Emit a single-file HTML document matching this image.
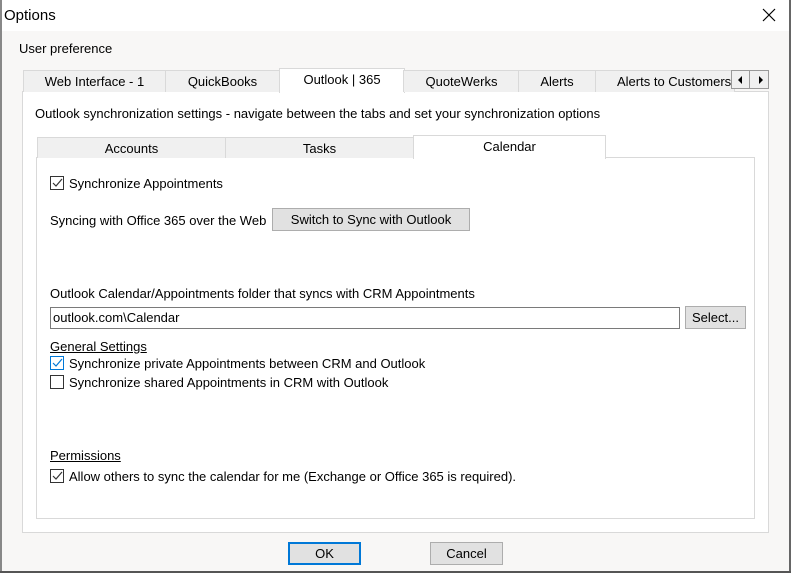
<!DOCTYPE html>
<html><head><style>
*{box-sizing:border-box;margin:0;padding:0}
body{width:794px;height:573px;position:relative;background:#fff;font-family:"Liberation Sans",sans-serif;font-size:13px;color:#000;overflow:hidden}
.a{position:absolute;white-space:nowrap}
.tab{position:absolute;background:#f0f0f0;border:1px solid #d9d9d9;border-bottom:none;text-align:center;line-height:21px}
.cb{position:absolute;width:14px;height:14px;border:1px solid #333;background:#fff}
.btn{position:absolute;background:#e1e1e1;border:1px solid #adadad;text-align:center}
</style></head><body>
<div class="a" style="left:4px;top:7px;font-size:15px">Options</div>
<svg class="a" style="left:762px;top:8px" width="14" height="14"><path d="M1 1L13 13M13 1L1 13" stroke="#000" stroke-width="1.2"/></svg>
<div class="a" style="left:0;top:31px;width:790px;height:542px;background:#f8f7f6"></div>
<div class="a" style="left:0;top:0;width:2px;height:573px;background:#888"></div>
<div class="a" style="left:789px;top:0;width:2px;height:573px;background:#666"></div>
<div class="a" style="left:0;top:571px;width:791px;height:2px;background:#555"></div>
<div class="a" style="left:19px;top:41px">User preference</div>
<div class="a" style="left:22px;top:91px;width:747px;height:442px;background:#fff;border:1px solid #d9d9d9"></div>
<div class="tab" style="left:23px;top:70px;width:143px;height:22px">Web Interface - 1</div>
<div class="tab" style="left:165px;top:70px;width:115px;height:22px">QuickBooks</div>
<div class="tab" style="left:279px;top:68px;width:126px;height:25px;background:#fff;line-height:22px">Outlook | 365</div>
<div class="tab" style="left:403px;top:70px;width:117px;height:22px">QuoteWerks</div>
<div class="tab" style="left:518px;top:70px;width:78px;height:22px">Alerts</div>
<div class="tab" style="left:595px;top:70px;width:140px;height:22px;text-align:left;padding-left:21px;overflow:hidden">Alerts to Customers</div>
<div class="a" style="left:731px;top:70px;width:38px;height:19px;background:#f0f0f0;border:1px solid #999"></div>
<div class="a" style="left:749px;top:70px;width:1px;height:19px;background:#999"></div>
<svg class="a" style="left:736px;top:75px" width="30" height="10"><path d="M6 1L2 5L6 9Z M23 1L27 5L23 9Z" fill="#000"/></svg>
<div class="a" style="left:35px;top:106px">Outlook synchronization settings - navigate between the tabs and set your synchronization options</div>
<div class="a" style="left:36px;top:157px;width:719px;height:362px;background:#fff;border:1px solid #d9d9d9"></div>
<div class="tab" style="left:37px;top:137px;width:189px;height:21px;line-height:21px">Accounts</div>
<div class="tab" style="left:225px;top:137px;width:189px;height:21px;line-height:21px">Tasks</div>
<div class="tab" style="left:413px;top:135px;width:193px;height:24px;background:#fff;line-height:22px">Calendar</div>
<div class="cb" style="left:50px;top:176px"></div>
<svg class="a" style="left:51px;top:177px" width="12" height="12"><path d="M2 6L5 9L11 2" stroke="#333" fill="none" stroke-width="1.2"/></svg>
<div class="a" style="left:69px;top:176px">Synchronize Appointments</div>
<div class="a" style="left:50px;top:213px">Syncing with Office 365 over the Web</div>
<div class="btn" style="left:272px;top:208px;width:198px;height:23px;line-height:21px">Switch to Sync with Outlook</div>
<div class="a" style="left:50px;top:286px">Outlook Calendar/Appointments folder that syncs with CRM Appointments</div>
<div class="a" style="left:50px;top:307px;width:630px;height:22px;border:1px solid #7a7a7a;background:#fff;padding-left:2px;line-height:20px">outlook.com\Calendar</div>
<div class="btn" style="left:685px;top:306px;width:61px;height:23px;line-height:21px">Select...</div>
<div class="a" style="left:50px;top:339px;text-decoration:underline">General Settings</div>
<div class="cb" style="left:50px;top:356px;border-color:#0078d7"></div>
<svg class="a" style="left:51px;top:357px" width="12" height="12"><path d="M2 6L5 9L11 2" stroke="#0078d7" fill="none" stroke-width="1.2"/></svg>
<div class="a" style="left:69px;top:356px">Synchronize private Appointments between CRM and Outlook</div>
<div class="cb" style="left:50px;top:375px"></div>
<div class="a" style="left:69px;top:375px">Synchronize shared Appointments in CRM with Outlook</div>
<div class="a" style="left:50px;top:448px;text-decoration:underline">Permissions</div>
<div class="cb" style="left:50px;top:469px"></div>
<svg class="a" style="left:51px;top:470px" width="12" height="12"><path d="M2 6L5 9L11 2" stroke="#333" fill="none" stroke-width="1.2"/></svg>
<div class="a" style="left:69px;top:469px">Allow others to sync the calendar for me (Exchange or Office 365 is required).</div>
<div class="btn" style="left:288px;top:542px;width:73px;height:23px;border:2px solid #0078d7;line-height:19px">OK</div>
<div class="btn" style="left:430px;top:542px;width:73px;height:23px;line-height:21px">Cancel</div>
</body></html>
